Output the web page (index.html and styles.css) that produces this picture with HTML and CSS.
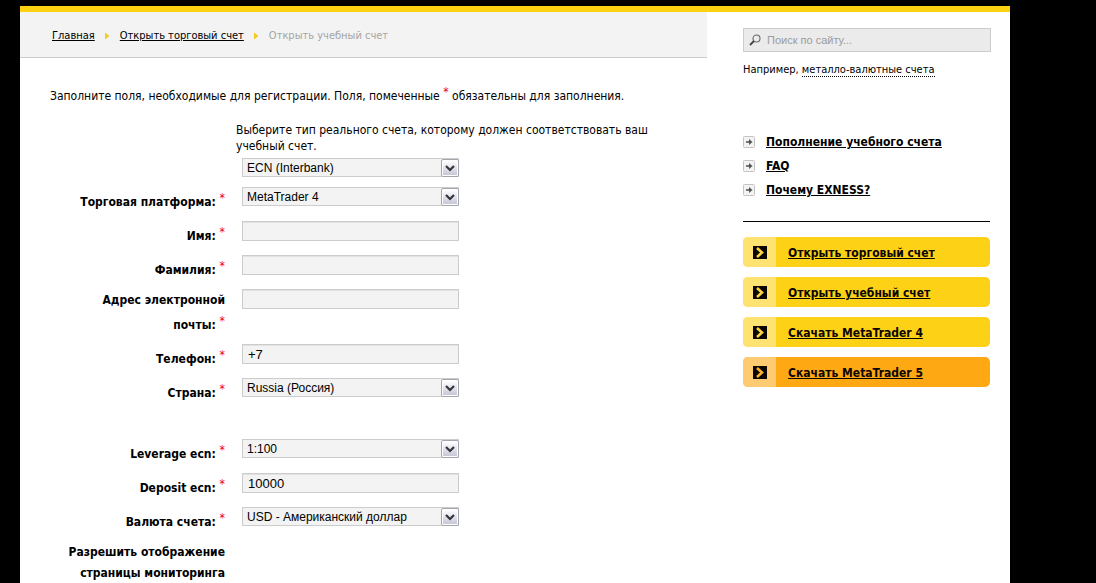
FILE: index.html
```html
<!DOCTYPE html>
<html lang="ru">
<head>
<meta charset="utf-8">
<title>Открыть учебный счет</title>
<link rel="stylesheet" href="styles.css">
</head>
<body>
<svg width="0" height="0" class="sprites" aria-hidden="true">
  <defs>
    <linearGradient id="btn-face" x1="0" y1="0" x2="0" y2="1">
      <stop offset="0" stop-color="#ffffff"/><stop offset="1" stop-color="#c6c7d6"/>
    </linearGradient>
    <symbol id="drop" viewBox="0 0 18 18">
      <rect x=".5" y=".5" width="17" height="17" rx="1.500" fill="#fff" stroke="#a3a4b0"/>
      <rect x="2" y="2" width="14" height="14" fill="url(#btn-face)"/>
      <path d="M5 7l4 4 4-4" fill="none" stroke="#33343c" stroke-width="2.200"/>
    </symbol>
    <symbol id="crumb" viewBox="0 0 5 8"><path d="M0 0.500L4.500 4 0 7.500z" fill="#f3ca23"/></symbol>
    <symbol id="go" viewBox="0 0 12 12">
      <rect x=".5" y=".5" width="11" height="11" rx="1" fill="#f3f3f3" stroke="#c4c4c4"/>
      <path d="M3 6h4" stroke="#555" stroke-width="1.600"/><path d="M6 3l3.500 3L6 9z" fill="#555"/>
    </symbol>
    <symbol id="chev" viewBox="0 0 14 13">
      <rect width="14" height="13" fill="#0a0500"/>
      <path d="M4 2L9 6.500 4 11" fill="none" stroke="currentColor" stroke-width="2.600"/>
    </symbol>
  </defs>
</svg>
<div class="page">
  <main class="main">
    <nav class="crumbs">
      <a href="#">Главная</a>
      <svg class="crumb-arrow"><use href="#crumb"/></svg>
      <a href="#">Открыть торговый счет</a>
      <svg class="crumb-arrow"><use href="#crumb"/></svg>
      <span class="current">Открыть учебный счет</span>
    </nav>
    <form class="form">
      <p class="intro">Заполните поля, необходимые для регистрации. Поля, помеченные <span class="req">*</span> обязательны для заполнения.</p>
      <div class="type">
        <label class="hint" for="type">Выберите тип реального счета, которому должен соответствовать ваш учебный счет.</label>
        <span class="select"><select id="type"><option>ECN (Interbank)</option></select><svg class="drop"><use href="#drop"/></svg></span>
      </div>
      <div class="row">
        <label for="platform">Торговая платформа: <span class="req">*</span></label>
        <span class="select"><select id="platform"><option>MetaTrader 4</option></select><svg class="drop"><use href="#drop"/></svg></span>
      </div>
      <div class="row">
        <label for="name">Имя: <span class="req">*</span></label>
        <input class="text" id="name" type="text">
      </div>
      <div class="row">
        <label for="surname">Фамилия: <span class="req">*</span></label>
        <input class="text" id="surname" type="text">
      </div>
      <div class="row">
        <label for="email">Адрес электронной почты: <span class="req">*</span></label>
        <input class="text" id="email" type="email">
      </div>
      <div class="row">
        <label for="phone">Телефон: <span class="req">*</span></label>
        <input class="text" id="phone" type="tel" value="+7">
      </div>
      <div class="row">
        <label for="country">Страна: <span class="req">*</span></label>
        <span class="select"><select id="country"><option>Russia (Россия)</option></select><svg class="drop"><use href="#drop"/></svg></span>
      </div>
      <div class="row group">
        <label for="leverage">Leverage ecn: <span class="req">*</span></label>
        <span class="select"><select id="leverage"><option>1:100</option></select><svg class="drop"><use href="#drop"/></svg></span>
      </div>
      <div class="row">
        <label for="deposit">Deposit ecn: <span class="req">*</span></label>
        <input class="text" id="deposit" type="text" value="10000">
      </div>
      <div class="row">
        <label for="currency">Валюта счета: <span class="req">*</span></label>
        <span class="select"><select id="currency"><option>USD - Американский доллар</option></select><svg class="drop"><use href="#drop"/></svg></span>
      </div>
      <div class="row">
        <span class="caption">Разрешить отображение страницы мониторинга</span>
      </div>
    </form>
  </main>
  <aside class="side">
    <form class="search">
      <svg class="lens" viewBox="0 0 12 12"><circle cx="7.500" cy="4.500" r="3.500" fill="none" stroke="#666" stroke-width="1.100"/><path d="M5 7L1 11" stroke="#444" stroke-width="1.800"/></svg>
      <input type="search" aria-label="Поиск по сайту" placeholder="Поиск по сайту...">
    </form>
    <p class="example">Например, <a href="#">металло-валютные счета</a></p>
    <ul class="links">
      <li><svg class="go"><use href="#go"/></svg><a href="#">Пополнение учебного счета</a></li>
      <li><svg class="go"><use href="#go"/></svg><a href="#">FAQ</a></li>
      <li><svg class="go"><use href="#go"/></svg><a href="#">Почему EXNESS?</a></li>
    </ul>
    <div class="actions">
      <a class="action" href="#"><span class="tab"><svg class="chev"><use href="#chev"/></svg></span><span class="name">Открыть торговый счет</span></a>
      <a class="action" href="#"><span class="tab"><svg class="chev"><use href="#chev"/></svg></span><span class="name">Открыть учебный счет</span></a>
      <a class="action" href="#"><span class="tab"><svg class="chev"><use href="#chev"/></svg></span><span class="name">Скачать MetaTrader 4</span></a>
      <a class="action orange" href="#"><span class="tab"><svg class="chev"><use href="#chev"/></svg></span><span class="name">Скачать MetaTrader 5</span></a>
    </div>
  </aside>
</div>
</body>
</html>
```
FILE: styles.css
```css
* { box-sizing: border-box; }
html { background: #000; }
body {
  margin: 0;
  padding: 6px 86px 0 20px;
  font: 12px/16px Tahoma, "DejaVu Sans Condensed", sans-serif;
  color: #000;
}
svg { display: block; flex: none; }
a { color: #000; }
p, ul { margin: 0; padding: 0; list-style: none; }
.sprites { position: absolute; }

.page {
  display: grid;
  grid-template-columns: minmax(0, 1fr) 303px;
  min-height: calc(100vh - 6px);
  border-top: 6px solid #fed113;
  background: #fff;
}

.crumbs {
  display: flex;
  align-items: center;
  gap: 10px;
  height: 46px;
  padding: 2px 0 0 32px;
  border-bottom: 1px solid #ccc;
  background: #f3f3f3;
  font-size: 11px;
}
.crumb-arrow { width: 5px; height: 8px; }
.current { color: #a5a5a5; }

.form { padding: 22px 30px 0; }
.intro { line-height: 24px; }
.req { color: #e00; font-weight: normal; vertical-align: 4px; }

.type { padding: 14px 0 0 186px; margin-bottom: 10px; }
.type .select { margin-left: 6px; }
.hint { display: block; max-width: 430px; margin-bottom: 4px; }

.row {
  display: grid;
  grid-template-columns: 165px 217px;
  column-gap: 17px;
  align-items: start;
  margin: 0 0 8px 10px;
}
.group { margin-top: 35px; }
.row label, .caption {
  padding-top: 1px;
  font-weight: bold;
  line-height: 21px;
  text-align: right;
}

.text, .select select {
  width: 100%;
  margin: 0;
  border: 1px solid #ccc;
  border-radius: 0;
  background: #f3f3f3;
  color: #000;
}
.text {
  display: block;
  height: 20px;
  padding: 0 5px;
  box-shadow: inset 0 1px 0 #e2e2e2;
  font: 13px/18px "Liberation Sans", Arial, sans-serif;
}
.select { display: grid; width: 217px; }
.select > * { grid-area: 1 / 1; }
.select select {
  height: 19px;
  padding: 0 20px 0 4px;
  appearance: none;
  font: 12px/16px "Liberation Sans", Arial, sans-serif;
}
.drop { width: 18px; height: 18px; justify-self: end; align-self: center; pointer-events: none; }

.side { padding: 16px 19px 0 36px; }
.search {
  display: flex;
  align-items: center;
  gap: 6px;
  height: 24px;
  padding: 0 5px;
  border: 1px solid #ccc;
  background: #ebebeb;
}
.lens { width: 12px; height: 12px; }
.search input {
  flex: 1;
  min-width: 0;
  padding: 0;
  border: 0;
  background: none;
  font: 11px/16px "Liberation Sans", Arial, sans-serif;
}
.search input::placeholder { color: #9b9b9b; }
.example { margin-top: 10px; font-size: 11px; }
.example a { text-decoration: none; border-bottom: 1px dotted #000; }

.links {
  display: grid;
  gap: 8px;
  margin: 56px 1px 0 0;
  padding-bottom: 23px;
  border-bottom: 1px solid #000;
  font-weight: bold;
}
.links li { display: flex; align-items: center; gap: 11px; }
.go { width: 12px; height: 12px; }

.actions { display: grid; gap: 10px; margin: 15px 1px 0 0; }
.action {
  display: flex;
  height: 30px;
  border-radius: 5px;
  overflow: hidden;
  background: #fdd116;
  color: #0a0500;
  font-weight: bold;
  line-height: 32px;
}
.tab { display: grid; place-items: center; width: 33px; background: #fee373; }
.chev { width: 14px; height: 13px; color: #fdd640; }
.name { padding-left: 12px; }
.orange { background: #fea914; }
.orange .tab { background: #fecb73; }
.orange .chev { color: #feb02c; }
```
